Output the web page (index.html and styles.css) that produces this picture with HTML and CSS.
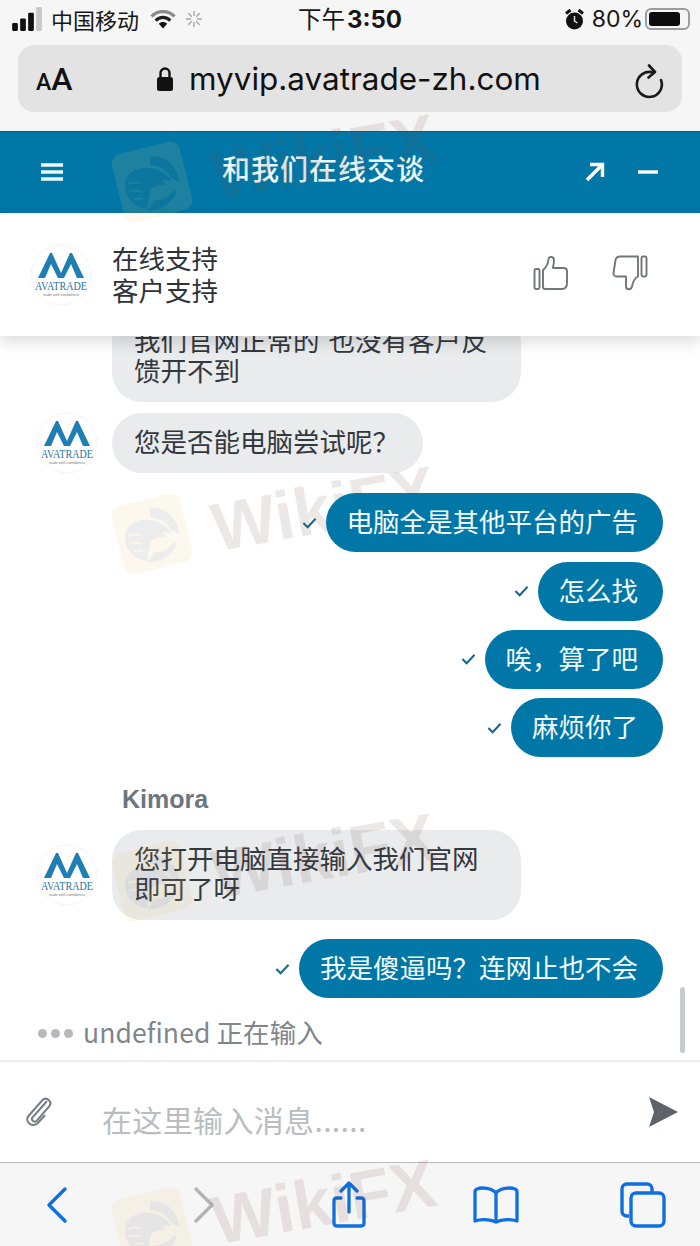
FILE: index.html
```html
<!DOCTYPE html>
<html lang="zh">
<head>
<meta charset="utf-8">
<title>和我们在线交谈</title>
<link rel="stylesheet" href="styles.css">
</head>
<body>
<svg class="defs" width="0" height="0" aria-hidden="true">
  <symbol id="mark" viewBox="0 0 82 82">
    <rect x="5" y="5" width="70" height="70" rx="10" transform="rotate(-14 40 40)" fill="#ecca72"/>
    <path d="M38 14A27 27 0 0 1 67 40L59 36C55 28 47 23 38 23Z" fill="#6f6f72"/>
    <path d="M65 48A27 27 0 0 1 36 68L42 58C50 59 56 55 60 50Z" fill="#6f6f72"/>
    <path d="M13 44C13 30 26 24 38 26 46 27 54 31 60 39L50 38 54 43C44 42 38 46 38 52L35 67C23 66 13 56 13 44Z" fill="#6f6f72"/>
    <path d="M16 42c5-2 9-2 13-1M17 50c5-2 9-2 13 0M22 58c3-2 6-2 9-1" fill="none" stroke="#ecca72" stroke-width="1.800"/>
  </symbol>
</svg>

<header class="safari-top">
  <div class="status">
    <div class="status-left">
      <svg class="signal" width="30" height="24" viewBox="0 0 26 21"><rect x="0" y="14" width="5" height="7" rx="1"/><rect x="7" y="10" width="5" height="11" rx="1"/><rect x="14" y="5" width="5" height="16" rx="1"/><rect x="21" y="0" width="5" height="21" rx="1" fill="#c9c9c9"/></svg>
      <span class="carrier">中国移动</span>
      <svg class="wifi" width="26" height="21" viewBox="0 0 24 20"><path d="M1 7C7 1 17 1 23 7" fill="none" stroke="#8a8a8a" stroke-width="3"/><path d="M5 11c4-4 10-4 14 0" fill="none" stroke="#222" stroke-width="3"/><path d="M8 14c2.400-2 5.600-2 8 0l-4 4.500z" fill="#111"/></svg>
      <svg class="spin" width="18" height="18" viewBox="0 0 18 18" stroke="#a5a5a5" stroke-width="1.300"><path d="M9 1v5M9 12v5M1 9h5M12 9h5M3.300 3.300l3.500 3.500M11.200 11.200l3.500 3.500M14.700 3.300l-3.500 3.500M6.800 11.200l-3.500 3.500"/></svg>
    </div>
    <div class="clock">下午<b>3:50</b></div>
    <div class="status-right">
      <svg width="19" height="23" viewBox="0 0 19 23"><circle cx="9.500" cy="13" r="8.500" fill="#111"/><path d="M1 5.500 5.500 2M18 5.500 13.500 2" stroke="#111" stroke-width="3"/><path d="M9.500 8v5l3 2" stroke="#ddd" stroke-width="1.500" fill="none"/></svg>
      <span class="pct">80%</span>
      <span class="battery"><span class="battery-fill"></span></span>
    </div>
  </div>
  <div class="urlbar">
    <span class="aa"><small>A</small>A</span>
    <div class="url">
      <svg width="18" height="26" viewBox="0 0 18 26"><path d="M4.500 11V7a4.500 4.500 0 0 1 9 0v4" fill="none" stroke="#111" stroke-width="2.400"/><rect x="1" y="11" width="16" height="14" rx="2.500" fill="#111"/></svg>
      <span>myvip.avatrade-zh.com</span>
    </div>
    <svg class="reload" width="30" height="36" viewBox="0 0 30 36"><path d="M18 8.500A12.500 12.500 0 1 0 26 16" fill="none" stroke="#1a1a1a" stroke-width="2.600" stroke-linecap="round"/><path d="M14 1.500 20 8l-6.500 5.500" fill="none" stroke="#1a1a1a" stroke-width="2.600" stroke-linecap="round" stroke-linejoin="round"/></svg>
  </div>
</header>

<section class="chat-head">
  <svg class="burger" width="24" height="20" viewBox="0 0 24 20"><path d="M1 3h22M1 10h22M1 17h22" stroke="#eaf7fb" stroke-width="3.500"/></svg>
  <h1>和我们在线交谈</h1>
  <div class="head-actions">
    <svg width="20" height="20" viewBox="0 0 20 20"><path d="M2 18 17 3M5 2.500h12.500V15" fill="none" stroke="#fff" stroke-width="3.400"/></svg>
    <svg width="22" height="20" viewBox="0 0 22 20"><path d="M1 10h20" stroke="#fff" stroke-width="3.400"/></svg>
  </div>
</section>

<section class="agent">
  <svg class="avatar-lg" viewBox="0 0 62 62"><circle cx="31" cy="31" r="30" fill="#fff" stroke="#f4f4f0"/><path class="ava-peaks" d="M8 34 20 9h2l9 20 9-20h2l12 25h-7l-6-14-7 14h-6l-7-14-6 14z"/><text x="31" y="46" text-anchor="middle" class="ava-name" textLength="52" lengthAdjust="spacingAndGlyphs">AVATRADE</text><text x="31" y="52" text-anchor="middle" class="ava-tag" textLength="36" lengthAdjust="spacingAndGlyphs">trade with confidence</text></svg>
  <div class="agent-text">
    <div>在线支持</div>
    <div>客户支持</div>
  </div>
  <div class="rating">
    <svg width="36" height="36" viewBox="0 0 36 36" fill="none" stroke="#70767c" stroke-width="1.900" stroke-linejoin="round"><rect x="1.500" y="14" width="5" height="20" rx="1.500"/><path d="M10 15c4-3 5-6 5.500-11 .3-3 5.500-3 5.500 1.500 0 3-1 6-1 7.500h10.500c2.500 0 3.500 1 3.500 3v12c0 4-2 6-5 6H12c-1.500 0-2-1-2-2z"/></svg>
    <svg width="36" height="36" viewBox="0 0 36 36" fill="none" stroke="#70767c" stroke-width="1.900" stroke-linejoin="round"><rect x="29.500" y="1.500" width="5" height="20" rx="1.500"/><path d="M26 1.500H8C6 1.500 4 3 3.500 5L1.500 18c-.3 2 1 3.500 3 3.500H14v10c0 3.500 5 4 6 0 .8-4 2-8 6-10z"/></svg>
  </div>
</section>

<main class="messages">
  <div class="row in">
    <span class="avatar-gap"></span>
    <p class="bubble wide">我们官网正常的 也没有客户反馈开不到</p>
  </div>
  <div class="row in">
    <svg class="avatar" viewBox="0 0 62 62"><circle cx="31" cy="31" r="30" fill="#fff" stroke="#f4f4f0"/><path class="ava-peaks" d="M8 34 20 9h2l9 20 9-20h2l12 25h-7l-6-14-7 14h-6l-7-14-6 14z"/><text x="31" y="46" text-anchor="middle" class="ava-name" textLength="52" lengthAdjust="spacingAndGlyphs">AVATRADE</text><text x="31" y="52" text-anchor="middle" class="ava-tag" textLength="36" lengthAdjust="spacingAndGlyphs">trade with confidence</text></svg>
    <p class="bubble">您是否能电脑尝试呢？</p>
  </div>
  <div class="row out first"><svg class="tick" viewBox="0 0 16 12"><path d="M1.500 6 6 10.500 14.500 1.500"/></svg><p class="bubble">电脑全是其他平台的广告</p></div>
  <div class="row out"><svg class="tick" viewBox="0 0 16 12"><path d="M1.500 6 6 10.500 14.500 1.500"/></svg><p class="bubble">怎么找</p></div>
  <div class="row out"><svg class="tick" viewBox="0 0 16 12"><path d="M1.500 6 6 10.500 14.500 1.500"/></svg><p class="bubble">唉，算了吧</p></div>
  <div class="row out"><svg class="tick" viewBox="0 0 16 12"><path d="M1.500 6 6 10.500 14.500 1.500"/></svg><p class="bubble">麻烦你了</p></div>
  <div class="sender">Kimora</div>
  <div class="row in">
    <svg class="avatar" viewBox="0 0 62 62"><circle cx="31" cy="31" r="30" fill="#fff" stroke="#f4f4f0"/><path class="ava-peaks" d="M8 34 20 9h2l9 20 9-20h2l12 25h-7l-6-14-7 14h-6l-7-14-6 14z"/><text x="31" y="46" text-anchor="middle" class="ava-name" textLength="52" lengthAdjust="spacingAndGlyphs">AVATRADE</text><text x="31" y="52" text-anchor="middle" class="ava-tag" textLength="36" lengthAdjust="spacingAndGlyphs">trade with confidence</text></svg>
    <p class="bubble wide">您打开电脑直接输入我们官网即可了呀</p>
  </div>
  <div class="row out first"><svg class="tick" viewBox="0 0 16 12"><path d="M1.500 6 6 10.500 14.500 1.500"/></svg><p class="bubble">我是傻逼吗？连网止也不会</p></div>
  <div class="typing"><i></i><i></i><i></i><span>undefined 正在输入</span></div>
  <span class="scroll-thumb"></span>
</main>

<section class="composer">
  <svg class="clip" width="28" height="30" viewBox="0 0 30 32" fill="none" stroke="#767c82" stroke-width="2.200" stroke-linecap="round"><path d="M24 5 9 22c-2 2.500 2 6 4.500 3.500L27 10c4-5-3-11-7.500-6.500L5 20c-5 6 3.500 13.500 9.500 8L22 20"/></svg>
  <span class="placeholder">在这里输入消息......</span>
  <svg class="send" width="32" height="32" viewBox="0 0 32 32"><path d="M2 1 31 16 2 31l5-15z" fill="#5c636b"/></svg>
</section>

<footer class="toolbar">
  <svg class="tb-back" width="24" height="38" viewBox="0 0 24 38"><path d="M20 3 4 19l16 16" fill="none" stroke="#0f6fe0" stroke-width="3.400" stroke-linecap="round" stroke-linejoin="round"/></svg>
  <svg class="tb-fwd" width="24" height="38" viewBox="0 0 24 38"><path d="M4 3l16 16L4 35" fill="none" stroke="#b4b4b6" stroke-width="3.400" stroke-linecap="round" stroke-linejoin="round"/></svg>
  <svg class="tb-share" width="38" height="48" viewBox="0 0 38 48" fill="none" stroke="#0f6fe0" stroke-width="3.300" stroke-linecap="round" stroke-linejoin="round"><path d="M11 17H7c-2 0-3 1-3 3v22c0 2 1 3 3 3h24c2 0 3-1 3-3V20c0-2-1-3-3-3h-4M19 31V3M11 10l8-8 8 8"/></svg>
  <svg class="tb-book" width="46" height="40" viewBox="0 0 46 40" fill="none" stroke="#0f6fe0" stroke-width="3.300" stroke-linejoin="round"><path d="M23 8C19 3 9 2 4 4c-1.500.6-2 1.500-2 3v29c5-2 15-2 21 1 6-3 16-3 21-1V7c0-1.500-.5-2.400-2-3-5-2-15-1-19 4zM23 8v29"/></svg>
  <svg class="tb-tabs" width="46" height="46" viewBox="0 0 46 46" fill="none" stroke="#0f6fe0" stroke-width="3.400"><path d="M9 34H7c-3 0-5-2-5-5V7c0-3 2-5 5-5h20c3 0 5 2 5 5v3"/><rect x="11" y="11" width="33" height="33" rx="5"/></svg>
</footer>

<div class="watermarks" aria-hidden="true">
  <div class="wm wm1"><svg class="wm-mark"><use href="#mark"/></svg><span>WikiFX</span></div>
  <div class="wm wm2"><svg class="wm-mark"><use href="#mark"/></svg><span>WikiFX</span></div>
  <div class="wm wm3"><svg class="wm-mark"><use href="#mark"/></svg><span>WikiFX</span></div>
  <div class="wm wm4"><svg class="wm-mark"><use href="#mark"/></svg><span>WikiFX</span></div>
</div>
</body>
</html>
```

FILE: styles.css
```css
* { box-sizing: border-box; }
html, body { margin: 0; padding: 0; }
body {
  position: relative;
  width: 700px;
  height: 1246px;
  overflow: hidden;
  display: flex;
  flex-direction: column;
  background: #fff;
  font-family: "Noto Sans CJK SC", "Liberation Sans", sans-serif;
  color: #33383d;
}
.defs { position: absolute; }
.ava-peaks { fill: #1f7fb5; }
.ava-name { font: 11.500px "Liberation Serif", serif; fill: #2a739f; }
.ava-tag { font: 3.500px "Liberation Sans", sans-serif; fill: #777; }

/* Safari chrome */
.safari-top { height: 131px; flex: none; background: #f6f6f6; padding: 0 18px; }
.status {
  height: 45px;
  margin: 0 -8px;
  padding-bottom: 7px;
  display: flex;
  align-items: center;
  justify-content: space-between;
  position: relative;
  color: #161616;
}
.status-left { display: flex; align-items: center; width: 230px; margin-left: 2px; }
.signal { fill: #111; }
.carrier { font-size: 22px; line-height: 26px; margin-left: 9px; }
.wifi { margin-left: 11px; }
.spin { margin-left: 9px; }
.clock { font-size: 23.500px; line-height: 28px; position: absolute; left: 288px; top: 4px; }
.clock b { font-family: Inter, "Liberation Sans", sans-serif; font-size: 24px; font-weight: 700; margin-left: 2px; }
.status-right { display: flex; align-items: center; gap: 6px; }
.pct { font-family: Inter, "Liberation Sans", sans-serif; font-size: 23px; margin-left: 2px; margin-right: -4px; }
.battery {
  width: 45px; height: 22px; border: 2px solid #9c9c9c; border-radius: 6px; padding: 2px; display: block;
}
.battery-fill { display: block; width: 31px; height: 14px; background: #0c0c0c; border-radius: 3px; }
.urlbar {
  height: 67px;
  background: #e3e3e3;
  border-radius: 16px;
  display: flex;
  align-items: center;
  padding: 0 17px 0 18px;
}
.aa { font-family: Roboto, "Liberation Sans", sans-serif; font-weight: 500; font-size: 32px; width: 120px; color: #111; }
.aa small { font-size: 23px; }
.url {
  flex: 1;
  display: flex;
  align-items: center;
  gap: 15px;
  font-family: Inter, "Liberation Sans", sans-serif;
  font-size: 31.450px;
  color: #111;
}
.reload { margin-bottom: -6px; }

/* Chat header */
.chat-head {
  height: 82px;
  flex: none;
  background: #0077a6;
  border-top: 1px solid #005f88;
  display: flex;
  align-items: center;
  padding: 0 40px;
  color: #eef8fb;
}
.burger { flex: none; margin-bottom: 2px; }
.chat-head h1 { margin: 0 0 10px 158px; font-size: 28px; font-weight: 500; letter-spacing: 1px; line-height: 36px; flex: 1; white-space: nowrap; }
.head-actions { display: flex; gap: 32px; margin-right: 1px; margin-bottom: 2px; }

/* Agent strip */
.agent {
  position: relative;
  z-index: 2;
  height: 123px;
  flex: none;
  background: #fff;
  box-shadow: 0 6px 14px rgba(0, 0, 0, .14);
  display: flex;
  align-items: center;
  padding: 0 52px 0 30px;
}
.avatar-lg { width: 62px; height: 62px; flex: none; overflow: visible; }
.agent-text { flex: 1; margin-left: 20px; font-size: 26.500px; line-height: 32px; color: #2e3338; margin-bottom: 1px; }
.rating { display: flex; gap: 43px; margin-bottom: 4px; }

/* Messages */
.messages {
  position: relative;
  height: 724px;
  flex: none;
  overflow: hidden;
  display: flex;
  flex-direction: column;
  justify-content: flex-end;
  gap: 10px;
  padding: 0 37px 13px;
}
.row { display: flex; align-items: center; flex: none; }
.row.in { gap: 14px; margin-left: -1px; }
.row.out { justify-content: flex-end; gap: 9px; }
.row.out + .row.out { margin-top: -.8px; }
.row.first { margin-top: 9px; }
.avatar { width: 62px; height: 62px; flex: none; overflow: visible; }
.avatar-gap { width: 62px; flex: none; }
.bubble {
  margin: 0;
  padding: 13px 25px 17px 21px;
  font-size: 26.500px;
  line-height: 30px;
  border-radius: 30px;
  white-space: nowrap;
}
.in .bubble { background: #e9ebed; color: #33383d; padding-left: 22px; padding-right: 24px; }
.out .bubble { position: relative; z-index: 6; background: #0077a6; color: #f2fafc; line-height: 29px; }
.bubble.wide { width: 409px; white-space: normal; word-spacing: 3px; }
.tick { width: 15px; height: 12px; fill: none; stroke: #17688a; stroke-width: 2.200; }
.sender { font-family: "Liberation Sans", sans-serif; font-weight: 700; font-size: 25px; color: #6d7680; line-height: 30px; margin: 17px 0 6px 85px; }
.typing {
  display: flex;
  align-items: center;
  gap: 4px;
  height: 28px;
  margin-top: 11px;
  margin-left: 1px;
  color: #7f868c;
  font-size: 26.500px;
}
.typing i { width: 9px; height: 9px; border-radius: 50%; background: #b5b9bd; }
.typing span { margin: -3px 0 0 6px; white-space: nowrap; letter-spacing: .1px; }
.scroll-thumb { position: absolute; right: 15px; bottom: 7px; width: 5px; height: 66px; border-radius: 3px; background: #c9cbcd; }

/* Composer */
.composer {
  height: 103px;
  flex: none;
  border-top: 2px solid #eeeeee;
  border-bottom: 1px solid #bdbdbd;
  display: flex;
  align-items: center;
  padding: 0 21px 0 24px;
  background: #fff;
}
.placeholder { flex: 1; margin-left: 50px; margin-top: 14px; font-size: 30px; letter-spacing: .35px; color: #b9bdc1; }

/* Toolbar */
.toolbar {
  flex: 1;
  background: #f6f6f6;
  display: flex;
  align-items: center;
  padding: 0 0 0 45px;
}
.tb-fwd { margin-left: 123px; }
.tb-share { margin-left: 114px; }
.tb-book { margin-left: 105px; }
.tb-tabs { margin-left: 101px; }

/* Watermark overlay */
.watermarks { position: absolute; inset: 0; z-index: 5; pointer-events: none; }
.wm { position: absolute; left: 112px; width: 340px; height: 100px; opacity: .12; }
.wm1 { top: 142px; }
.wm2 { top: 494px; }
.wm3 { top: 841px; }
.wm4 { top: 1187px; }
.wm-mark { position: absolute; left: 0; top: 0; width: 82px; height: 82px; }
.wm span {
  position: absolute;
  left: 109px;
  top: -17px;
  font: 700 68px/100px "Liberation Sans", sans-serif;
  color: #6e4a3e;
  transform: rotate(-10deg);
  transform-origin: left bottom;
  white-space: nowrap;
}
```
